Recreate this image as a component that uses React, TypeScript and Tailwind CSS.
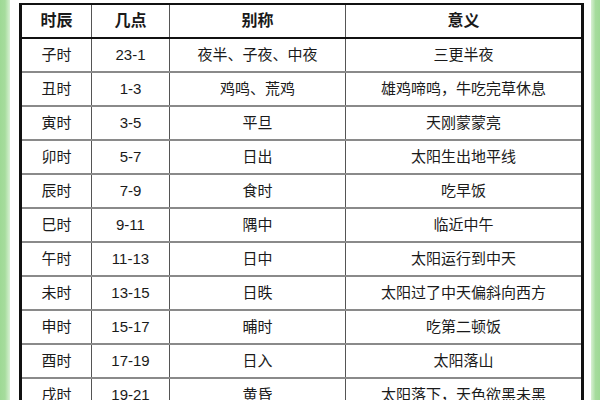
import React from "react";

const rows: [string, string, string, string][] = [
  ["子时", "23-1", "夜半、子夜、中夜", "三更半夜"],
  ["丑时", "1-3", "鸡鸣、荒鸡", "雄鸡啼鸣，牛吃完草休息"],
  ["寅时", "3-5", "平旦", "天刚蒙蒙亮"],
  ["卯时", "5-7", "日出", "太阳生出地平线"],
  ["辰时", "7-9", "食时", "吃早饭"],
  ["巳时", "9-11", "隅中", "临近中午"],
  ["午时", "11-13", "日中", "太阳运行到中天"],
  ["未时", "13-15", "日昳", "太阳过了中天偏斜向西方"],
  ["申时", "15-17", "晡时", "吃第二顿饭"],
  ["酉时", "17-19", "日入", "太阳落山"],
  ["戌时", "19-21", "黄昏", "太阳落下，天色欲黑未黑"],
];

const font = { fontFamily: '"Liberation Sans", "Noto Sans CJK SC", sans-serif' };

export default function App() {
  return (
    <div className="w-[600px] h-[400px] overflow-hidden bg-white flex" style={font}>
      <div className="w-[10px] h-full bg-gradient-to-r from-[#9ed995] via-[#a6dc9d] to-[#d8f0d4]" />
      <div className="w-[9px]" />
      <div className="w-[565px] pt-[3px]">
        <div className="border-x-[3px] border-[#111] text-[#1a1a1a]">
          <div className="grid grid-cols-[70px_78px_176px_1fr] h-[36px] border-y-2 border-[#111] font-bold text-[16px]">
            <div className="flex items-center justify-center border-r border-[#555]">时辰</div>
            <div className="flex items-center justify-center border-r border-[#555]">几点</div>
            <div className="flex items-center justify-center border-r border-[#555]">别称</div>
            <div className="flex items-center justify-center">意义</div>
          </div>
          {rows.map((r, i) => (
            <div
              key={i}
              className="grid grid-cols-[70px_78px_176px_1fr] h-[34px] border-b-2 border-[#8a8a8a] text-[15px]"
            >
              <div className="flex items-center justify-center border-r border-[#555]">{r[0]}</div>
              <div className="flex items-center justify-center border-r border-[#555]">{r[1]}</div>
              <div className="flex items-center justify-center border-r border-[#555]">{r[2]}</div>
              <div className="flex items-center justify-center">{r[3]}</div>
            </div>
          ))}
        </div>
      </div>
      <div className="w-[7px]" />
      <div className="w-[9px] h-full bg-gradient-to-r from-[#d8f0d4] via-[#a6dc9d] to-[#9ed995]" />
    </div>
  );
}
